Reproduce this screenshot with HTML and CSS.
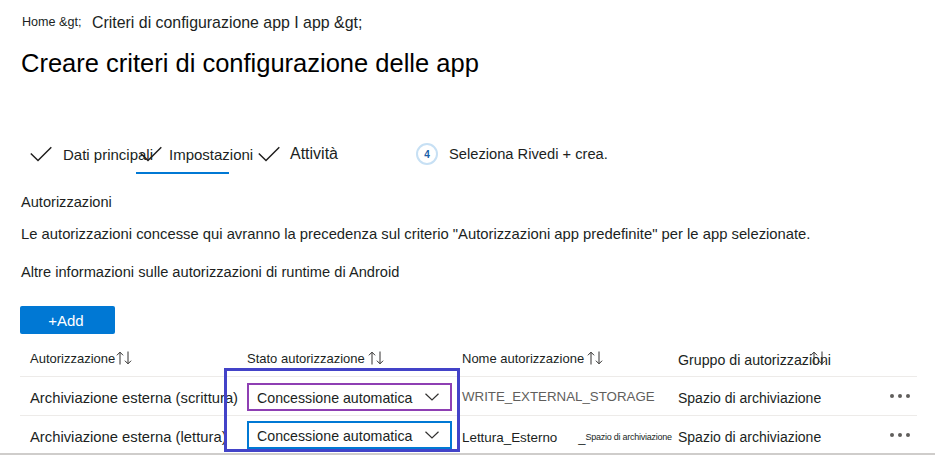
FILE: index.html
```html
<!DOCTYPE html>
<html lang="it">
<head>
<meta charset="utf-8">
<title>Creare criteri di configurazione delle app</title>
<link rel="stylesheet" href="styles.css">
</head>
<body>
<div class="page">
  <div class="content">
    <div class="breadcrumb">
      <span class="crumb-home">Home &amp;gt;</span>
      <span class="crumb">Criteri di configurazione app I app &amp;gt;</span>
    </div>
    <h1 class="title">Creare criteri di configurazione delle app</h1>

    <div class="steps">
      <span class="check check-1"><svg viewBox="0 0 22 16" width="22" height="16"><polyline points="0.8,7.5 8,14.5 21.3,1.2" fill="none" stroke="#201f1e" stroke-width="1.5"/></svg></span>
      <span class="step step-1">Dati principali</span>
      <span class="check check-2"><svg viewBox="0 0 22 16" width="22" height="16"><polyline points="0.8,7.5 8,14.5 21.3,1.2" fill="none" stroke="#201f1e" stroke-width="1.5"/></svg></span>
      <span class="step step-2">Impostazioni</span>
      <span class="check check-3"><svg viewBox="0 0 22 16" width="22" height="16"><polyline points="0.8,7.5 8,14.5 21.3,1.2" fill="none" stroke="#201f1e" stroke-width="1.5"/></svg></span>
      <span class="step step-3">Attività</span>
      <span class="step-num">4</span>
      <span class="step step-4">Seleziona Rivedi + crea.</span>
    </div>
    <div class="tab-underline"></div>

    <div class="section-title">Autorizzazioni</div>
    <p class="desc">Le autorizzazioni concesse qui avranno la precedenza sul criterio "Autorizzazioni app predefinite" per le app selezionate.</p>
    <p class="more">Altre informazioni sulle autorizzazioni di runtime di Android</p>

    <button class="btn-add">+Add</button>
  </div>

  <div class="table-wrap">
    <div class="grid head">
      <div class="cell c1">Autorizzazione<svg class="sort" viewBox="0 0 16 14" width="16" height="14"><path d="M4 13.5V1.2M0.9 4.3L4 1.2L7.1 4.3M12 0.5V12.8M8.9 9.7L12 12.8L15.1 9.7" fill="none" stroke="#323130" stroke-width="1"/></svg></div>
      <div class="cell c2">Stato autorizzazione <svg class="sort" viewBox="0 0 16 14" width="16" height="14"><path d="M4 13.5V1.2M0.9 4.3L4 1.2L7.1 4.3M12 0.5V12.8M8.9 9.7L12 12.8L15.1 9.7" fill="none" stroke="#323130" stroke-width="1"/></svg></div>
      <div class="cell c3">Nome autorizzazione <svg class="sort" viewBox="0 0 16 14" width="16" height="14"><path d="M4 13.5V1.2M0.9 4.3L4 1.2L7.1 4.3M12 0.5V12.8M8.9 9.7L12 12.8L15.1 9.7" fill="none" stroke="#323130" stroke-width="1"/></svg></div>
      <div class="cell c4"><span class="group-head">Gruppo di autorizzazioni</span><svg class="sort sort-over" viewBox="0 0 16 14" width="16" height="14"><path d="M4 13.5V1.2M0.9 4.3L4 1.2L7.1 4.3M12 0.5V12.8M8.9 9.7L12 12.8L15.1 9.7" fill="none" stroke="#323130" stroke-width="1"/></svg></div>
      <div class="cell c5"></div>
    </div>

    <div class="grid row row-1">
      <div class="cell c1 text">Archiviazione esterna (scrittura)</div>
      <div class="cell c2"><div class="dropdown dd-purple"><span>Concessione automatica</span><svg viewBox="0 0 14 8" width="14" height="8"><polyline points="0.5,0.8 7,7 13.5,0.8" fill="none" stroke="#323130" stroke-width="1.2"/></svg></div></div>
      <div class="cell c3 code">WRITE_EXTERNAL_STORAGE</div>
      <div class="cell c4 text">Spazio di archiviazione</div>
      <div class="cell c5"><span class="dots"><i></i><i></i><i></i></span></div>
    </div>

    <div class="grid row row-2">
      <div class="cell c1 text">Archiviazione esterna (lettura)</div>
      <div class="cell c2"><div class="dropdown dd-blue"><span>Concessione automatica</span><svg viewBox="0 0 14 8" width="14" height="8"><polyline points="0.5,0.8 7,7 13.5,0.8" fill="none" stroke="#323130" stroke-width="1.2"/></svg></div></div>
      <div class="cell c3 text"><span class="name">Lettura_Esterno</span><span class="under">_</span><span class="tiny">Spazio di archiviazione</span></div>
      <div class="cell c4 text">Spazio di archiviazione</div>
      <div class="cell c5"><span class="dots"><i></i><i></i><i></i></span></div>
    </div>

    <div class="highlight"></div>
  </div>
</div>
</body>
</html>
```

FILE: styles.css
```css
* { box-sizing: border-box; }

body {
  margin: 0;
  background: #ffffff;
  color: #201f1e;
  font-family: "Liberation Sans", Arial, sans-serif;
}

.page {
  width: 935px;
  height: 455px;
  overflow: hidden;
}

.content {
  padding-left: 21px;
}

/* breadcrumb */
.breadcrumb {
  display: flex;
  align-items: flex-start;
  padding-top: 13px;
  height: 33px;
}
.crumb-home {
  font-size: 12.6px;
  line-height: 18px;
  width: 70px;
  margin-left: 1px;
}
.crumb {
  font-size: 15.9px;
  line-height: 20px;
}

.title {
  margin: 15px 0 0;
  font-size: 25.5px;
  line-height: 30px;
  font-weight: normal;
  color: #000;
}

/* wizard steps */
.steps {
  display: flex;
  align-items: center;
  height: 24px;
  margin-top: 64px;
  white-space: nowrap;
  font-size: 15px;
}
.check {
  flex: none;
  width: 22px;
  height: 16px;
  display: flex;
}
.check-1 { margin-left: 9px; }
.step { flex: none; }
.step-1 { margin-left: 11px; width: 77px; }
.step-2 { margin-left: 7px; width: 89px; }
.step-3 { margin-left: 10px; width: 126px; font-size: 16px; }
.step-num {
  flex: none;
  width: 22px;
  height: 22px;
  border-radius: 50%;
  border: 2px solid #c7e0f4;
  color: #1a5fa8;
  font-size: 10px;
  font-weight: bold;
  display: flex;
  align-items: center;
  justify-content: center;
}
.step-4 { margin-left: 11px; font-size: 14.7px; }

.tab-underline {
  margin-top: 6px;
  margin-left: 115px;
  width: 93px;
  height: 2px;
  background: #0078d4;
}

.section-title {
  margin-top: 18px;
  font-size: 14.6px;
  line-height: 20px;
}
.desc {
  margin: 12px 0 0;
  font-size: 14.8px;
  line-height: 20px;
}
.more {
  margin: 18px 0 0;
  font-size: 14.65px;
  line-height: 20px;
}

.btn-add {
  display: block;
  margin: 24px 0 0 -1px;
  width: 95px;
  height: 28px;
  border: none;
  border-radius: 2px;
  background: #0078d4;
  color: #fff;
  font-family: inherit;
  font-size: 15px;
  padding: 0 3px 0 0;
}

/* table */
.table-wrap {
  position: relative;
  margin-top: 6px;
  padding-left: 20px;
  padding-right: 18px;
  border-bottom: 2px solid #cfcdcb;
}
.grid {
  display: grid;
  grid-template-columns: 227px 215px 216px 200px 39px;
}
.cell {
  display: flex;
  align-items: center;
  white-space: nowrap;
}
.c1 { padding-left: 10px; }
.c5 { padding-left: 12px; }

.head {
  height: 37px;
  border-bottom: 1px solid #edebe9;
  font-size: 13px;
  padding-top: 1px;
}
.group-head { font-size: 14.2px; padding-top: 2px; }
.sort { flex: none; margin-left: 1px; margin-top: -2px; }
.head .c2 .sort, .head .c3 .sort { margin-left: 3px; }
.sort-over { margin-left: -21px; }

.row { font-size: 14.8px; }
.row-1 { height: 39px; border-bottom: 1px solid #edebe9; }
.row-2 { height: 37px; }
.text { padding-top: 4px; }
.row-2 .text { padding-top: 5px; }
.c4.text { font-size: 14px; }

.dropdown {
  width: 205px;
  height: 28px;
  border: 2px solid;
  display: flex;
  align-items: center;
  justify-content: space-between;
  padding: 3px 11px 0 8px;
  font-size: 14.2px;
}
.dd-purple { border-color: #8e3fb3; margin-top: 1px; }
.dd-blue { border-color: #0078d4; }
.dropdown svg { margin-top: -3px; }

.code {
  color: #605e5c;
  font-size: 13.3px;
}
.name { font-size: 13.4px; }
.under { margin-left: 21px; font-size: 13px; }
.tiny {
  font-size: 9px;
  align-self: flex-start;
  margin-top: 11px;
  letter-spacing: -0.25px;
}

.dots {
  display: flex;
  gap: 4px;
  margin-top: 0;
}
.dots i {
  width: 4px;
  height: 4px;
  border-radius: 50%;
  background: #605e5c;
}

.highlight {
  position: absolute;
  left: 224px;
  top: 28px;
  width: 236px;
  height: 84px;
  border: 3px solid #4343c8;
  pointer-events: none;
}
```
